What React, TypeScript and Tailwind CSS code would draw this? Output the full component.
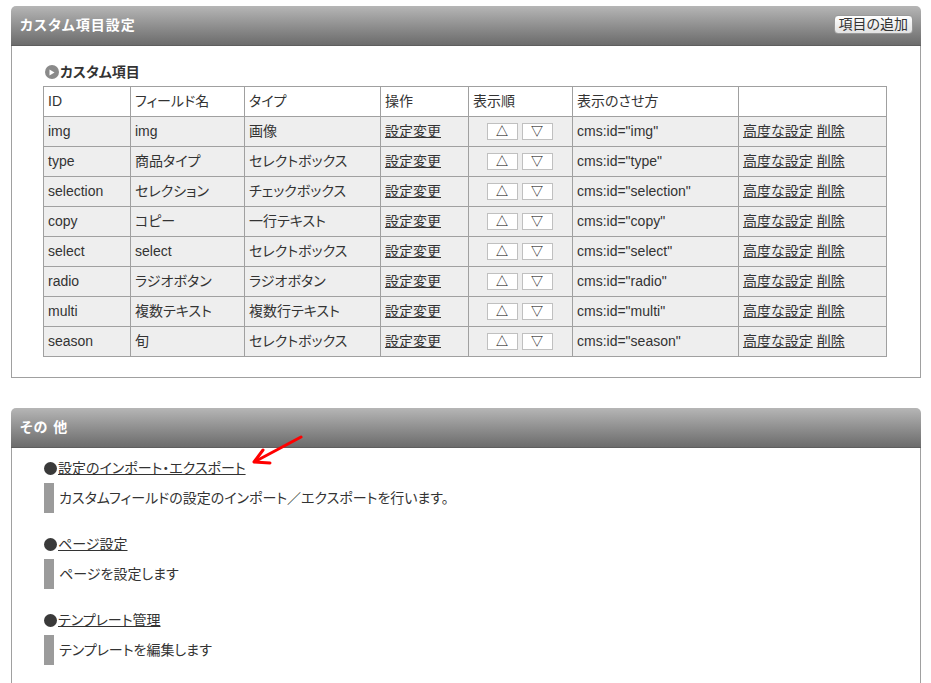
import React from 'react';

const rows = [
  { id: 'img', name: 'img', type: '画像' },
  { id: 'type', name: '商品タイプ', type: 'セレクトボックス' },
  { id: 'selection', name: 'セレクション', type: 'チェックボックス' },
  { id: 'copy', name: 'コピー', type: '一行テキスト' },
  { id: 'select', name: 'select', type: 'セレクトボックス' },
  { id: 'radio', name: 'ラジオボタン', type: 'ラジオボタン' },
  { id: 'multi', name: '複数テキスト', type: '複数行テキスト' },
  { id: 'season', name: '旬', type: 'セレクトボックス' },
];

const others = [
  { title: '設定のインポート・エクスポート', desc: 'カスタムフィールドの設定のインポート／エクスポートを行います。' },
  { title: 'ページ設定', desc: 'ページを設定します' },
  { title: 'テンプレート管理', desc: 'テンプレートを編集します' },
];

function PanelHeader({ title, children }: { title: string; children?: React.ReactNode }) {
  return (
    <div className="flex h-[40px] items-center justify-between rounded-t-[5px] border-b border-[#5e5e5e] bg-gradient-to-b from-[#b6b6b6] to-[#6c6c6c] pl-[9px] pr-[8px]">
      <h2 className="text-[14px] font-bold tracking-[1px] text-white">{title}</h2>
      {children}
    </div>
  );
}

export default function App() {
  const cell = 'border border-[#a0a0a0] pl-[4px] align-middle';
  return (
    <div
      className="min-h-[683px] bg-white pt-[6px] pl-[11px] pr-[10px] text-[14px] text-[#333] [font-feature-settings:'palt']"
      style={{ fontFamily: '"Liberation Sans", "Noto Sans CJK JP", sans-serif' }}
    >
      {/* カスタム項目設定 */}
      <section className="w-[910px]">
        <PanelHeader title="カスタム項目設定">
          <button className="mt-[-2px] h-[19px] rounded-[4px] border border-[#999] bg-gradient-to-b from-white to-[#e2e2e2] px-[4px] text-[14px] leading-[17px] text-[#333]">
            項目の追加
          </button>
        </PanelHeader>
        <div className="border border-t-0 border-[#a0a0a0] pt-[18px] pb-[20px] pl-[31px]">
          <div className="flex h-[16px] items-center gap-[1px] pl-[2px]">
            <span className="flex h-[14px] w-[14px] items-center justify-center rounded-full bg-[#8a8a8a]">
              <svg width="6" height="7" viewBox="0 0 6 7">
                <path d="M0.5 0.5 L5.5 3.5 L0.5 6.5 Z" fill="#fff" />
              </svg>
            </span>
            <span className="font-bold">カスタム項目</span>
          </div>
          <table className="mt-[6px] w-[843px] table-fixed border-collapse">
            <colgroup>
              <col className="w-[87px]" />
              <col className="w-[114px]" />
              <col className="w-[136px]" />
              <col className="w-[88px]" />
              <col className="w-[104px]" />
              <col className="w-[166px]" />
              <col className="w-[148px]" />
            </colgroup>
            <thead>
              <tr className="h-[30px] bg-white text-left">
                <th className={`${cell} font-normal`}>ID</th>
                <th className={`${cell} font-normal`}>フィールド名</th>
                <th className={`${cell} font-normal`}>タイプ</th>
                <th className={`${cell} font-normal`}>操作</th>
                <th className={`${cell} font-normal`}>表示順</th>
                <th className={`${cell} font-normal`}>表示のさせ方</th>
                <th className={`${cell} font-normal`}></th>
              </tr>
            </thead>
            <tbody>
              {rows.map((r) => (
                <tr key={r.id} className="h-[30px] bg-[#eeeeee]">
                  <td className={cell}>{r.id}</td>
                  <td className={cell}>{r.name}</td>
                  <td className={cell}>{r.type}</td>
                  <td className={cell}>
                    <a href="#" className="underline">設定変更</a>
                  </td>
                  <td className="border border-[#a0a0a0] text-center align-middle">
                    <div className="flex justify-center gap-[4px] pr-[2px]">
                      <button className="h-[17px] w-[31px] border border-[#c0c0c0] bg-white text-[12px] leading-[14px] text-black">△</button>
                      <button className="h-[17px] w-[31px] border border-[#c0c0c0] bg-white text-[12px] leading-[14px] text-black">▽</button>
                    </div>
                  </td>
                  <td className={cell}>cms:id="{r.id}"</td>
                  <td className={cell}>
                    <a href="#" className="underline">高度な設定</a>{' '}
                    <a href="#" className="underline">削除</a>
                  </td>
                </tr>
              ))}
            </tbody>
          </table>
        </div>
      </section>

      {/* その他 */}
      <section className="relative mt-[30px] w-[910px]">
        <PanelHeader title="その 他" />
        <div className="border border-t-0 border-[#a0a0a0] pt-[10px] pb-[30px] pl-[32px]">
          <div className="flex flex-col gap-[21px]">
            {others.map((o) => (
              <div key={o.title}>
                <div className="flex h-[20px] items-center">
                  <span className="mr-[1px] inline-block h-[13px] w-[13px] rounded-full bg-[#3a3a3a]" />
                  <a href="#" className="underline">{o.title}</a>
                </div>
                <div className="mt-[5px] flex h-[30px] items-center">
                  <span className="h-full w-[10px] bg-[#9b9b9b]" />
                  <span className="pl-[5px]">{o.desc}</span>
                </div>
              </div>
            ))}
          </div>
        </div>
        <svg
          className="absolute left-[240px] top-[27px]"
          width="56"
          height="32"
          viewBox="0 0 56 32"
        >
          <path d="M50 2 L5 26" stroke="#ff0000" strokeWidth="3" strokeLinecap="round" />
          <path d="M3 27 L12 15 M3 27 L19 28" stroke="#ff0000" strokeWidth="3" strokeLinecap="round" />
        </svg>
      </section>
    </div>
  );
}
